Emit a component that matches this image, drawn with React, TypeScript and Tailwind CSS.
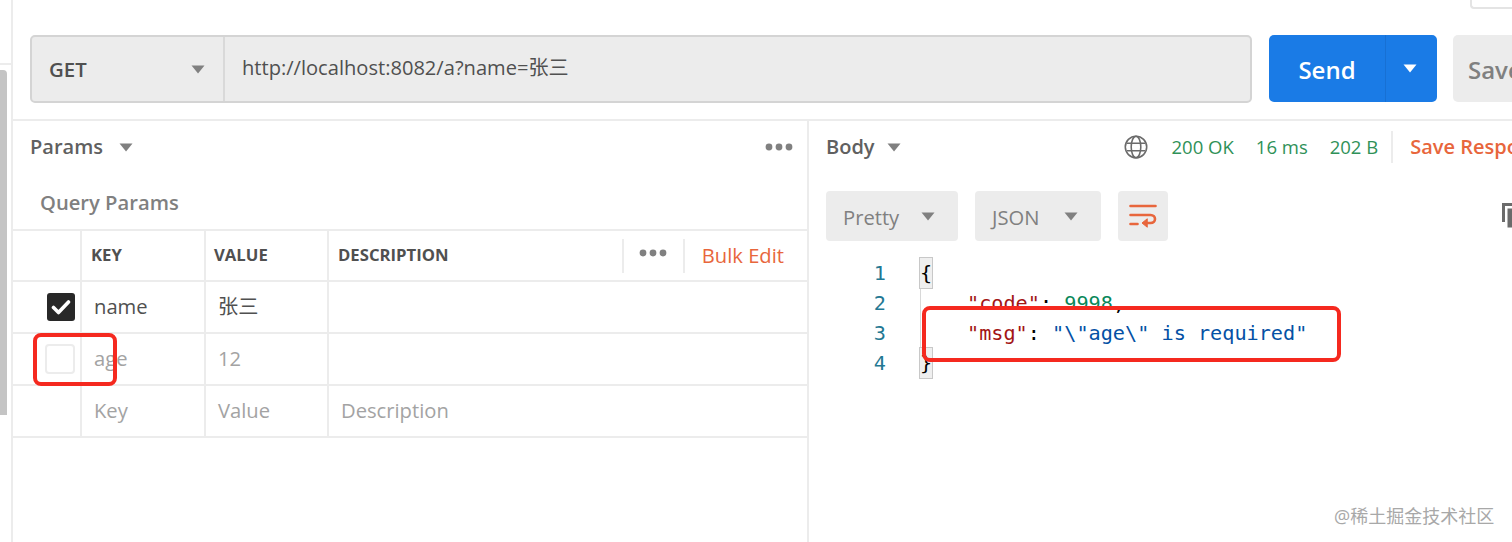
function Caret({ className = "" }: { className?: string }) {
  return (
    <svg width="14" height="9" viewBox="0 0 14 9" className={`shrink-0 ${className}`}>
      <path d="M0.5 0.5h13L7 8.5z" fill="currentColor" />
    </svg>
  );
}

function Dots() {
  return (
    <svg width="28" height="8" viewBox="0 0 28 8" className="text-[#808080]">
      <circle cx="4" cy="4" r="3.4" fill="currentColor" />
      <circle cx="14" cy="4" r="3.4" fill="currentColor" />
      <circle cx="24" cy="4" r="3.4" fill="currentColor" />
    </svg>
  );
}

function Globe() {
  return (
    <svg width="24" height="24" viewBox="0 0 26 26" fill="none" stroke="#6b6b6b" strokeWidth="1.7" className="shrink-0">
      <circle cx="13" cy="13" r="11.6" />
      <ellipse cx="13" cy="13" rx="5.2" ry="11.6" />
      <path d="M3 9h20M3 17h20" />
    </svg>
  );
}

function WrapIcon() {
  return (
    <svg width="28" height="28" viewBox="0 0 28 28" fill="none" stroke="#e8663c" strokeWidth="2.6" strokeLinecap="round">
      <path d="M1.5 4h25" />
      <path d="M1.5 13h20c6 0 6 8 0 8h-5" />
      <path d="M1.5 22h7" />
      <path d="M18 17l-5 4 5 4z" fill="#e8663c" strokeWidth="1" />
    </svg>
  );
}

function ParamRow({ k, v, desc, muted, check }: { k: string; v: string; desc?: string; muted?: boolean; check?: "on" | "off" }) {
  const tone = muted ? "text-[#a3a3a3]" : "text-[#505050]";
  return (
    <div className="flex h-[52px] border-b-2 border-[#ececec] text-[20.2px]">
      <div className="flex w-[67px] items-center justify-end pr-[5px]">
        {check === "on" && (
          <div className="flex h-[28px] w-[28px] items-center justify-center rounded-[3px] bg-[#282828]">
            <svg width="20" height="16" viewBox="0 0 20 16" fill="none" stroke="#fff" strokeWidth="3.6" strokeLinecap="round" strokeLinejoin="round">
              <path d="M2.5 8.5l5 5 10-10.5" />
            </svg>
          </div>
        )}
        {check === "off" && <div className="h-[30px] w-[30px] rounded-[4px] border-2 border-[#ececec] bg-white" />}
      </div>
      <div className={`flex w-[124px] items-center border-l-2 border-[#ececec] pb-[2px] pl-[12px] ${tone}`}>{k}</div>
      <div className={`flex w-[123px] items-center border-l-2 border-[#ececec] pb-[2px] pl-[12px] ${tone}`}>{v}</div>
      <div className="flex flex-1 items-center border-l-2 border-[#ececec] pb-[2px] pl-[12px] text-[#a3a3a3]">{desc}</div>
    </div>
  );
}

function Selector({ label, width }: { label: string; width: string }) {
  return (
    <div className={`flex h-[50px] items-center justify-between rounded-[4px] bg-[#ececec] pl-[17px] pr-[23px] text-[20.2px] text-[#808080] ${width}`}>
      <span className="pt-[3px]">{label}</span>
      <Caret className="text-[#808080]" />
    </div>
  );
}

export default function App() {
  return (
    <div
      className="relative flex h-[542px] w-[1512px] overflow-hidden bg-white"
      style={{ fontFamily: '"Open Sans", "Noto Sans CJK SC", sans-serif' }}
    >
      {/* sidebar edge + scrollbar */}
      <div className="w-[13px] shrink-0 border-r-2 border-[#ececec]">
        <div className="h-[65px] border-b-2 border-[#ececec]" />
        <div className="mt-[5px] h-[345px] w-[7px] rounded-tr-[4px] bg-[#c4c4c4]" />
      </div>

      <div className="flex min-w-0 flex-1 flex-col">
        {/* request bar */}
        <div className="h-[121px] shrink-0 border-b-2 border-[#ececec]">
          <div className="flex h-[35px] items-start justify-end">
            <div className="h-[9px] w-[42px] rounded-bl-[4px] border-b-2 border-l-2 border-[#e4e4e4]" />
          </div>
          <div className="flex pl-[17px]">
            <div className="flex h-[68px] w-[1222px] rounded-[5px] border-2 border-[#d4d4d4] bg-[#ececec]">
              <div className="flex w-[193px] items-center justify-between border-r-2 border-[#d9d9d9] pl-[17px] pr-[18px]">
                <span className="text-[20.4px] font-semibold text-[#505050]">GET</span>
                <Caret className="text-[#808080]" />
              </div>
              <div className="flex flex-1 items-center pb-[1px] pl-[17px] text-[20.1px] text-[#505050]">http://localhost:8082/a?name=张三</div>
            </div>
            <div className="ml-[17px] flex h-[67px] w-[168px] rounded-[5px] bg-[#1a7be6] text-white">
              <div className="flex w-[116px] items-center justify-center pt-[2px] text-[24px] font-semibold">Send</div>
              <div className="flex flex-1 items-center justify-center border-l border-[#1770d4] pr-[4px]">
                <Caret />
              </div>
            </div>
            <div className="ml-[16px] flex h-[67px] flex-1 items-center overflow-hidden rounded-l-[5px] bg-[#ececec] pl-[15px] pt-[2px] text-[24px] font-semibold text-[#808080]">
              Save
            </div>
          </div>
        </div>

        <div className="flex min-h-0 flex-1">
          {/* params pane */}
          <div className="w-[796px] shrink-0 border-r-2 border-[#ececec]">
            <div className="flex h-[52px] items-center pl-[17px] pr-[14px]">
              <span className="text-[20px] font-semibold text-[#606060]">Params</span>
              <Caret className="ml-[16px] text-[#808080]" />
              <div className="ml-auto">
                <Dots />
              </div>
            </div>
            <div className="flex h-[56px] items-center pl-[27px] pt-[2px] text-[20.2px] font-semibold text-[#808080]">Query Params</div>
            <div className="flex h-[53px] border-y-2 border-[#ececec] text-[16.7px] font-bold text-[#505050]">
              <div className="w-[67px]" />
              <div className="flex w-[124px] items-center border-l-2 border-[#ececec] pb-[2px] pl-[9px]">KEY</div>
              <div className="flex w-[123px] items-center border-l-2 border-[#ececec] pb-[2px] pl-[8px]">VALUE</div>
              <div className="flex flex-1 items-center border-l-2 border-[#ececec] pb-[2px] pl-[9px]">DESCRIPTION</div>
              <div className="flex items-center pr-[23px]">
                <div className="flex h-[34px] w-[63px] items-center justify-center border-x-2 border-[#ececec] pb-[5px]">
                  <Dots />
                </div>
                <span className="ml-[17px] text-[20.2px] font-normal text-[#e8663c]">Bulk Edit</span>
              </div>
            </div>
            <ParamRow k="name" v="张三" check="on" />
            <ParamRow k="age" v="12" muted check="off" />
            <ParamRow k="Key" v="Value" desc="Description" muted />
          </div>

          {/* response pane */}
          <div className="min-w-0 flex-1 overflow-hidden">
            <div className="flex h-[52px] items-center whitespace-nowrap pl-[17px] text-[18.5px]">
              <span className="text-[20px] font-semibold text-[#606060]">Body</span>
              <Caret className="ml-[12px] text-[#808080]" />
              <div className="ml-[223px]">
                <Globe />
              </div>
              <span className="ml-[24px] text-[#2f9158]">200 OK</span>
              <span className="ml-[22px] text-[#2f9158]">16 ms</span>
              <span className="ml-[22px] text-[#2f9158]">202 B</span>
              <div className="ml-[13px] h-[32px] w-[2px] shrink-0 bg-[#ececec]" />
              <span className="ml-[17px] text-[20px] font-semibold text-[#e8663c]">Save Response</span>
            </div>
            <div className="mt-[18px] flex h-[50px] items-start pl-[17px]">
              <Selector label="Pretty" width="w-[132px]" />
              <div className="ml-[17px]">
                <Selector label="JSON" width="w-[126px]" />
              </div>
              <div className="ml-[17px] flex h-[50px] w-[50px] items-center justify-center rounded-[4px] bg-[#ececec]">
                <WrapIcon />
              </div>
              <svg width="14" height="26" viewBox="0 0 14 26" fill="none" stroke="#6b6b6b" strokeWidth="3" className="ml-auto mr-[-4px] mt-[11px]">
                <path d="M1.5 20V2.5H14" />
                <path d="M7 24V8h7v16z" fill="#6b6b6b" />
              </svg>
            </div>
            <div
              className="mt-[17px] flex text-[20.2px] leading-[30px] whitespace-pre"
              style={{ fontFamily: '"DejaVu Sans Mono", monospace' }}
            >
              <div className="w-[77px] text-right text-[#237893]">
                <div>1</div>
                <div>2</div>
                <div>3</div>
                <div>4</div>
              </div>
              <div className="ml-[34px] border-l border-[#d8d8d8] text-black">
                <div>
                  <span className="-ml-[1px] inline-block h-[30px] w-[12px] bg-[#efefef] outline outline-[#c8c8c8]">{"{"}</span>
                </div>
                <div className="pl-[46px]">
                  <span className="text-[#a31515]">"code"</span>: <span className="text-[#09885a]">9998</span>,
                </div>
                <div className="pl-[46px]">
                  <span className="text-[#a31515]">"msg"</span>: <span className="text-[#0451a5]">{'"\\"age\\" is required"'}</span>
                </div>
                <div>
                  <span className="-ml-[1px] inline-block h-[30px] w-[12px] bg-[#efefef] outline outline-[#c8c8c8]">{"}"}</span>
                </div>
              </div>
            </div>
          </div>
        </div>
      </div>

      {/* hand-drawn red markers on top of the screenshot */}
      <div className="absolute left-[33px] top-[333px] h-[53px] w-[84px] rounded-[8px] border-[4px] border-[#f5291f]" />
      <div className="absolute left-[922px] top-[306px] h-[56px] w-[419px] rounded-[8px] border-[4px] border-[#f5291f]" />
      <div className="absolute left-[1334px] top-[503px] text-[18px] text-[#a8a8a8]">@稀土掘金技术社区</div>
    </div>
  );
}
